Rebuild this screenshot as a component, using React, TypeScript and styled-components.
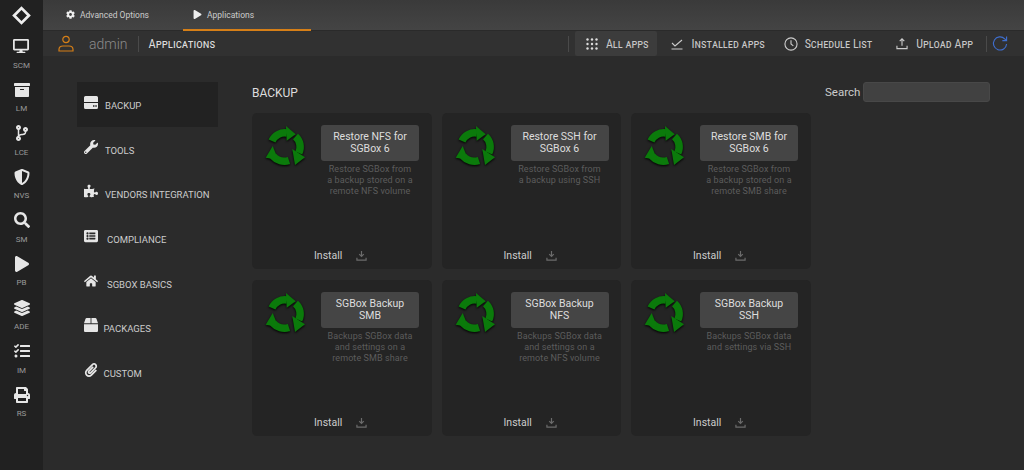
import React from "react";
import styled, { createGlobalStyle } from "styled-components";
import {
  FaDesktop, FaArchive, FaShieldAlt, FaSearch, FaPlay, FaLayerGroup, FaTasks, FaPrint,
  FaWrench, FaPuzzlePiece, FaListAlt, FaHome, FaPaperclip, FaCog, FaCodeBranch, FaBox,
} from "react-icons/fa";

const Global = createGlobalStyle`
  html, body { margin: 0; padding: 0; background: #2b2b2b; }
  body { font-family: Roboto, "Liberation Sans", sans-serif; overflow: hidden; }
  * { box-sizing: border-box; }
`;

const Page = styled.div`display: flex; width: 1024px; height: 470px; background: #2b2b2b;`;
const Rail = styled.nav`
  width: 43px; flex: none; background: #212121; display: flex; flex-direction: column; align-items: center;
`;
const Logo = styled.div`height: 30px; width: 100%; display: flex; align-items: center; justify-content: center;`;
const RailItem = styled.div`
  height: 43.6px; display: flex; flex-direction: column; align-items: center; padding-top: 8px; color: #e6e6e6;
  svg { font-size: 16px; display: block; }
`;
const RailLabel = styled.span`font-size: 8px; color: #999; line-height: 10px; margin-top: 6.5px;`;
const Main = styled.div`flex: 1; min-width: 0; display: flex; flex-direction: column;`;
const TabBar = styled.div`
  height: 31px; flex: none; display: flex; background: linear-gradient(#3a3a3a, #444);
  border-bottom: 1px solid #2a2a2a; padding-left: 12px;
`;
const Tab = styled.div<{ $active?: boolean }>`
  width: 128px; height: 31px; display: flex; align-items: center; gap: 5px;
  padding-left: ${(p) => (p.$active ? "10px" : "11px")}; font-size: 8.5px; color: #ccc;
  border-bottom: 2px solid ${(p) => (p.$active ? "#d67f17" : "transparent")};
  svg { color: #eee; }
`;
const ToolBar = styled.div`
  height: 25px; flex: none; display: flex; align-items: center; background: #313131; padding-left: 15px;
`;
const UserName = styled.span`font-size: 14px; color: #8b8b8b; margin-left: 15px; font-weight: 300;`;
const Sep = styled.span<{ $ml?: number }>`width: 1px; height: 16px; background: #4a4a4a; margin-left: ${(p) => p.$ml ?? 0}px;`;
const Title = styled.span`font-size: 12.5px; font-variant: small-caps; font-stretch: 75%; color: #ddd; margin-left: 10px;`;
const Spacer = styled.div`flex: 1;`;
const Action = styled.div<{ $active?: boolean; $ml: number; $gap: number }>`
  height: 25px; display: flex; align-items: center; gap: ${(p) => p.$gap}px; margin-left: ${(p) => p.$ml}px;
  padding: ${(p) => (p.$active ? "0 8px 0 11px" : "0")};
  font-size: 12px; font-variant: small-caps; font-stretch: 75%; color: #c8c8c8; white-space: nowrap;
  background: ${(p) => (p.$active ? "#3c3c3c" : "transparent")}; border-radius: 2px;
`;
const Refresh = styled.span`margin: 0 16px 0 5px; display: flex;`;
const Body = styled.div`flex: 1; display: flex; min-height: 0;`;
const Menu = styled.div`width: 175px; flex: none; margin: 26px 0 0 34px; display: flex; flex-direction: column;`;
const MenuItem = styled.div<{ $active?: boolean }>`
  height: 44.6px; width: 141px; display: flex; align-items: center; padding-left: 7px;
  font-size: 9.5px; color: #ccc; background: ${(p) => (p.$active ? "#222" : "transparent")}; white-space: nowrap;
`;
const MenuIcon = styled.span<{ $w: number }>`
  width: ${(p) => p.$w}px; flex: none; display: flex; margin-top: -4px;
  svg { font-size: 14px; color: #e6e6e6; }
`;
const MenuText = styled.span`margin-top: 3px;`;
const Content = styled.div`width: 569px; padding-top: 30px;`;
const Heading = styled.div`font-size: 12px; color: #ddd; line-height: 14px; margin-bottom: 13px;`;
const Grid = styled.div`display: grid; grid-template-columns: repeat(3, 179.5px); gap: 11px 10px;`;
const Card = styled.div`
  height: 156px; background: #242424; border-radius: 5px; display: flex; flex-direction: column;
`;
const CardTop = styled.div`display: flex; flex: 1; padding: 12px 10px 0 12px;`;
const CardText = styled.div`width: 98px; margin-left: 15px; display: flex; flex-direction: column; align-items: center;`;
const CardTitle = styled.div`
  width: 98px; height: 36px; padding: 0 8px; background: #454545; border-radius: 3px; display: flex; align-items: center; justify-content: center;
  text-align: center; font-size: 10.5px; line-height: 12px; color: #ddd;
`;
const CardDesc = styled.div`width: 88px; font-size: 9px; line-height: 11px; color: #5c5c5c; text-align: center; margin-top: 3px; letter-spacing: .1px;`;
const CardFoot = styled.div`display: flex; align-items: center; height: 27px; padding: 0 0 0 62px; gap: 14px;`;
const Install = styled.span`font-size: 10.5px; color: #ccc;`;
const SearchBox = styled.div`display: flex; align-items: center; gap: 3px; margin: 26px 0 0 4px; height: 20px;`;
const SearchLabel = styled.span`font-size: 11.5px; color: #ccc;`;
const SearchInput = styled.div`width: 127px; height: 20px; background: #414141; border: 1px solid #484848; border-radius: 3px;`;

const LogoIcon = () => (
  <svg width="19" height="19" viewBox="0 0 18 18" fill="none" stroke="#eee" strokeWidth="2.6">
    <path d="M9 2 16 9 9 16 2 9Z" />
  </svg>
);
const UserIcon = () => (
  <svg width="16" height="17" viewBox="0 0 16 17" fill="none" stroke="#d67f17" strokeWidth="1.2">
    <circle cx="8" cy="4.5" r="3.2" />
    <path d="M1 16v-1.5C1 12 3 11 5 11h6c2 0 4 1 4 3.5V16Z" />
  </svg>
);
const HddIcon = () => (
  <svg width="14" height="13" viewBox="0 0 14 13" fill="#e6e6e6">
    <path d="M1.500 0h11A1.500 1.500 0 0 1 14 1.500V6H0V1.500A1.500 1.500 0 0 1 1.500 0Z" />
    <path fillRule="evenodd" d="M0 7h14v4.500a1.500 1.500 0 0 1-1.500 1.500h-11A1.500 1.500 0 0 1 0 11.500ZM9 9.300v1.400h1.500V9.300ZM11.300 9.300v1.400h1.500V9.300Z" />
  </svg>
);
const RecycleSvg = styled.svg`flex: none; filter: drop-shadow(0 1px 1px #000);`;
const Recycle = () => (
  <RecycleSvg width="42" height="42" viewBox="-21 -21 42 42">
    <g fill="none" stroke="#0b7a0b" strokeWidth="7.5">
      <path d="M-13-5A14 14 0 0 1 2-13" />
      <path d="M10.500-9.500A14 14 0 0 1 13.800 7" />
      <path d="M4 14.500A15 15 0 0 1-12 10" />
    </g>
    <g fill="#0b7a0b">
      <path d="M1-20 10.700-11.700 1.700-5.300Z" />
      <path d="M7.300 3 20 11.300 10 19Z" />
      <path d="M-19.300 11.700-12.300 0-6.700 14Z" />
    </g>
  </RecycleSvg>
);
const DownIcon = () => (
  <svg width="11" height="11" viewBox="0 0 12 12" fill="none" stroke="#6b6b6b" strokeWidth="1.3">
    <path d="M6 1v6M3.500 4.500 6 7l2.500-2.500M1 8.500V11h10V8.500" />
  </svg>
);
const GridIcon = () => (
  <svg width="12" height="12" viewBox="0 0 12 12" fill="#ddd">
    {[1.500, 6, 10.500].flatMap((x) => [1.500, 6, 10.500].map((y) => <circle key={`${x}${y}`} cx={x} cy={y} r="1.200" />))}
  </svg>
);
const CheckIcon = () => (
  <svg width="12" height="12" viewBox="0 0 12 12" fill="none" stroke="#ccc" strokeWidth="1.100">
    <path d="M1 5l3 3 7-6M0.500 11h11" />
  </svg>
);
const ClockIcon = () => (
  <svg width="14" height="14" viewBox="0 0 15 15" fill="none" stroke="#ccc" strokeWidth="1.200">
    <circle cx="7.500" cy="7.500" r="6.500" />
    <path d="M7.500 3.500v4l2.500 2" />
  </svg>
);
const UploadIcon = () => (
  <svg width="12" height="13" viewBox="0 0 13 13" fill="none" stroke="#ccc" strokeWidth="1.200">
    <path d="M6.500 9V1.500M4 4l2.500-2.500L9 4M1 9v3h11V9" />
  </svg>
);
const RefreshIcon = () => (
  <svg width="16" height="17" viewBox="0 0 17 17" fill="none" stroke="#3f6fd0" strokeWidth="1.200">
    <path d="M15.500 9a7 7 0 1 1-2-5.500L15.500 5.500M15.500 1v4.500H11" />
  </svg>
);

const rail: [React.ComponentType, string][] = [
  [FaDesktop, "SCM"], [FaArchive, "LM"], [FaCodeBranch, "LCE"], [FaShieldAlt, "NVS"], [FaSearch, "SM"],
  [FaPlay, "PB"], [FaLayerGroup, "ADE"], [FaTasks, "IM"], [FaPrint, "RS"],
];
const menu: [React.ComponentType, string, number][] = [
  [HddIcon, "BACKUP", 21], [FaWrench, "TOOLS", 21], [FaPuzzlePiece, "VENDORS INTEGRATION", 21],
  [FaListAlt, "COMPLIANCE", 23], [FaHome, "SGBOX BASICS", 23], [FaBox, "PACKAGES", 19.5], [FaPaperclip, "CUSTOM", 19.5],
];
const cards = [
  ["Restore NFS for SGBox 6", "Restore SGBox from a backup stored on a remote NFS volume"],
  ["Restore SSH for SGBox 6", "Restore SGBox from a backup using SSH"],
  ["Restore SMB for SGBox 6", "Restore SGBox from a backup stored on a remote SMB share"],
  ["SGBox Backup SMB", "Backups SGBox data and settings on a remote SMB share"],
  ["SGBox Backup NFS", "Backups SGBox data and settings on a remote NFS volume"],
  ["SGBox Backup SSH", "Backups SGBox data and settings via SSH"],
];

export default function App() {
  return (
    <Page>
      <Global />
      <Rail>
        <Logo><LogoIcon /></Logo>
        {rail.map(([I, l]) => (
          <RailItem key={l}><I /><RailLabel>{l}</RailLabel></RailItem>
        ))}
      </Rail>
      <Main>
        <TabBar>
          <Tab><FaCog size={9} />Advanced Options</Tab>
          <Tab $active><FaPlay size={9} />Applications</Tab>
        </TabBar>
        <ToolBar>
          <UserIcon />
          <UserName>admin</UserName>
          <Sep $ml={10} />
          <Title>Applications</Title>
          <Spacer />
          <Sep />
          <Action $active $ml={6} $gap={8}><GridIcon />All apps</Action>
          <Action $ml={14} $gap={9}><CheckIcon />Installed apps</Action>
          <Action $ml={19} $gap={7}><ClockIcon />Schedule List</Action>
          <Action $ml={24} $gap={8}><UploadIcon />Upload App</Action>
          <Sep $ml={13} />
          <Refresh><RefreshIcon /></Refresh>
        </ToolBar>
        <Body>
          <Menu>
            {menu.map(([I, l, w], i) => (
              <MenuItem key={l} $active={i === 0}><MenuIcon $w={w}><I /></MenuIcon><MenuText>{l}</MenuText></MenuItem>
            ))}
          </Menu>
          <Content>
            <Heading>BACKUP</Heading>
            <Grid>
              {cards.map(([t, d]) => (
                <Card key={t}>
                  <CardTop>
                    <Recycle />
                    <CardText>
                      <CardTitle>{t}</CardTitle>
                      <CardDesc>{d}</CardDesc>
                    </CardText>
                  </CardTop>
                  <CardFoot><Install>Install</Install><DownIcon /></CardFoot>
                </Card>
              ))}
            </Grid>
          </Content>
          <SearchBox><SearchLabel>Search</SearchLabel><SearchInput /></SearchBox>
        </Body>
      </Main>
    </Page>
  );
}
